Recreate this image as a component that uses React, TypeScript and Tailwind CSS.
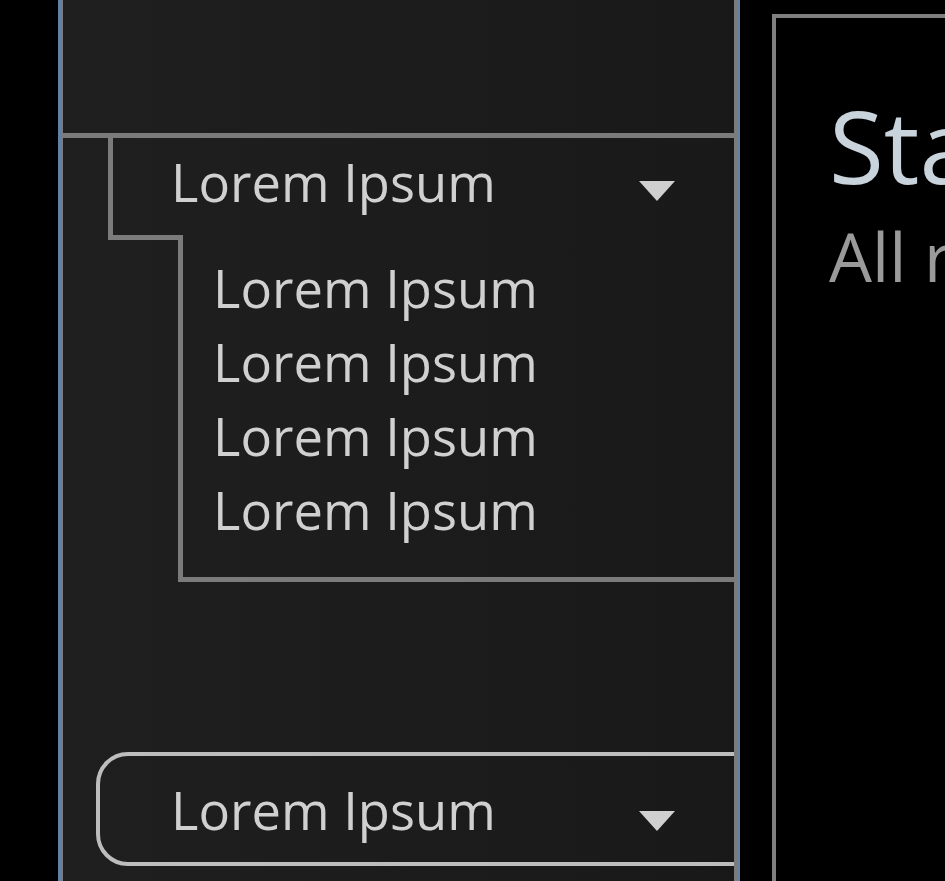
function Caret() {
  return (
    <svg width="36" height="20" viewBox="0 0 36 20" className="shrink-0">
      <path d="M0 0 H36 L18 20 Z" fill="#d0d0d0" />
    </svg>
  );
}

const items = ["Lorem Ipsum", "Lorem Ipsum", "Lorem Ipsum", "Lorem Ipsum"];

export default function App() {
  return (
    <div className="flex h-[881px] w-[945px] overflow-hidden bg-black font-['Open_Sans',sans-serif] text-[#d0d0d0]">
      {/* Sidebar */}
      <aside className="ml-[58px] flex w-[682px] shrink-0 border-x-[3px] border-[#6380a6]">
        <div className="flex flex-1 flex-col overflow-hidden border-l-2 border-r-[3px] border-[#7b7b7b] bg-gradient-to-r from-[#1f1f1f] to-[#191919]">
          <div className="h-[138px] shrink-0 border-b-[5px] border-[#7b7b7b]" />

          {/* Expanded group */}
          <div className="ml-[45px] flex h-[97px] shrink-0 items-center justify-between border-l-[5px] border-[#7b7b7b] pb-[8px] pl-[58px] pr-[59px]">
            <span className="text-[52.5px] leading-none">Lorem Ipsum</span>
            <div className="mt-[17px]">
              <Caret />
            </div>
          </div>
          <div className="ml-[45px] h-[5px] w-[75px] shrink-0 bg-[#7b7b7b]" />
          <ul className="ml-[115px] shrink-0 border-b-[5px] border-l-[5px] border-[#7b7b7b] pb-[30px] pl-[30px] pt-[11px]">
            {items.map((item, i) => (
              <li key={i} className="text-[52.5px] leading-[74px]">
                {item}
              </li>
            ))}
          </ul>

          {/* Collapsed select */}
          <div className="-mr-[40px] ml-[33px] mt-[170px] flex h-[114px] shrink-0 items-center justify-between rounded-[32px] border-[4px] border-[#bdbdbd] pl-[71px] pr-[95px] pt-[3px]">
            <span className="text-[52.5px] leading-none">Lorem Ipsum</span>
            <div className="mt-[20px]">
              <Caret />
            </div>
          </div>
        </div>
      </aside>

      {/* Main */}
      <main className="ml-[32px] mt-[14px] h-[900px] w-[400px] shrink-0 border-[4px] border-[#7f7f7f] pl-[53px] pt-[77px]">
        <h1 className="whitespace-nowrap text-[100px] leading-none text-[#c9d3dc]">Statistics</h1>
        <p className="mt-[27px] whitespace-nowrap text-[68px] leading-none text-[#9a9a9a]">All records</p>
      </main>
    </div>
  );
}
